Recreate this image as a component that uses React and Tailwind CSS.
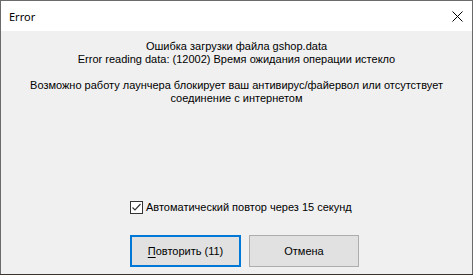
import { useState } from 'react';

export default function App() {
  const [retry, setRetry] = useState(true);

  return (
    <div className="w-[473px] h-[275px] bg-[#3b322b] overflow-hidden">
      <div className="w-[473px] h-[274px] border border-[#6b6b6b] border-b-0 flex flex-col bg-[#f0f0f0] font-['Liberation_Sans',sans-serif] text-[11px] text-black">
        {/* title bar */}
        <div className="h-[30px] bg-white flex items-center justify-between pl-[8px] pr-[9px]">
          <span className="font-['Noto_Sans',sans-serif] text-[11px] leading-none text-black">Error</span>
          <svg width="11" height="11" viewBox="0 0 11 11">
            <path d="M0.5 0.5 L10.5 10.5 M10.5 0.5 L0.5 10.5" stroke="#000" strokeWidth="1" />
          </svg>
        </div>

        {/* message */}
        <div className="flex flex-col items-center text-center leading-[13px] pt-[9px]">
          <p>Ошибка загрузки файла gshop.data</p>
          <p>Error reading data: (12002) Время ожидания операции истекло</p>
          <p className="h-[13px]"></p>
          <p>Возможно работу лаунчера блокирует ваш антивирус/файервол или отсутствует</p>
          <p>соединение с интернетом</p>
        </div>

        {/* checkbox */}
        <label className="flex items-center gap-[3px] ml-[129px] mt-[96px] cursor-default">
          <span
            onClick={() => setRetry(!retry)}
            className="w-[13px] h-[13px] border border-[#333] bg-white flex items-center justify-center"
          >
            {retry && (
              <svg width="11" height="11" viewBox="0 0 11 11">
                <path d="M1.5 5.5 L4 8 L9.5 2" fill="none" stroke="#333" strokeWidth="1.2" />
              </svg>
            )}
          </span>
          <span className="leading-[13px]">Автоматический повтор через 15 секунд</span>
        </label>

        {/* buttons */}
        <div className="flex gap-[8px] ml-[129px] mt-[21px]">
          <button className="w-[111px] h-[32px] bg-[#e1e1e1] border-2 border-[#0078d7] text-[11px]">
            <span className="underline underline-offset-2">П</span>овторить (11)
          </button>
          <button className="w-[110px] h-[32px] bg-[#e1e1e1] border border-[#adadad] text-[11px]">
            Отмена
          </button>
        </div>
      </div>
    </div>
  );
}
